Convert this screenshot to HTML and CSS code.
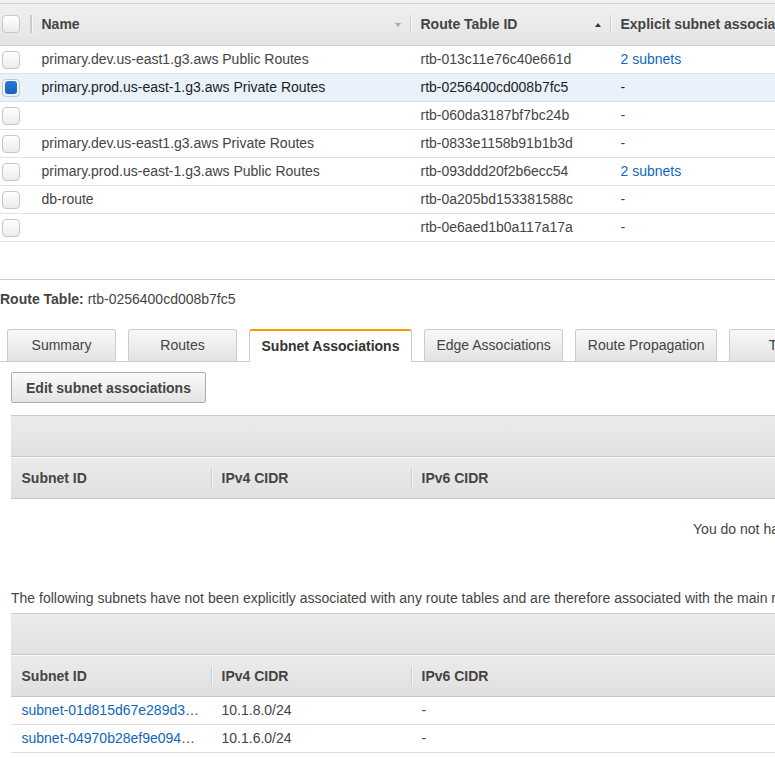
FILE: index.html
```html
<!DOCTYPE html>
<html lang="en">
<head>
<meta charset="utf-8">
<title>Route Tables</title>
<link rel="stylesheet" href="styles.css">
</head>
<body>
<div class="page">
  <section class="master">
    <div class="top-strip"></div>
    <div class="rt-row rt-head">
      <div class="cell chk-cell"><span class="chk"></span></div>
      <div class="cell hcell sep">Name<span class="sort sort-down"></span></div>
      <div class="cell hcell sep">Route Table ID<span class="sort sort-up"></span></div>
      <div class="cell hcell sep">Explicit subnet association</div>
    </div>
    <div class="rt-row"><div class="cell chk-cell"><span class="chk"></span></div><div class="cell">primary.dev.us-east1.g3.aws Public Routes</div><div class="cell">rtb-013c11e76c40e661d</div><div class="cell"><a class="link">2 subnets</a></div></div>
    <div class="rt-row selected"><div class="cell chk-cell"><span class="chk checked"></span></div><div class="cell">primary.prod.us-east-1.g3.aws Private Routes</div><div class="cell">rtb-0256400cd008b7fc5</div><div class="cell">-</div></div>
    <div class="rt-row"><div class="cell chk-cell"><span class="chk"></span></div><div class="cell"></div><div class="cell">rtb-060da3187bf7bc24b</div><div class="cell">-</div></div>
    <div class="rt-row"><div class="cell chk-cell"><span class="chk"></span></div><div class="cell">primary.dev.us-east1.g3.aws Private Routes</div><div class="cell">rtb-0833e1158b91b1b3d</div><div class="cell">-</div></div>
    <div class="rt-row"><div class="cell chk-cell"><span class="chk"></span></div><div class="cell">primary.prod.us-east-1.g3.aws Public Routes</div><div class="cell">rtb-093ddd20f2b6ecc54</div><div class="cell"><a class="link">2 subnets</a></div></div>
    <div class="rt-row"><div class="cell chk-cell"><span class="chk"></span></div><div class="cell">db-route</div><div class="cell">rtb-0a205bd153381588c</div><div class="cell">-</div></div>
    <div class="rt-row"><div class="cell chk-cell"><span class="chk"></span></div><div class="cell"></div><div class="cell">rtb-0e6aed1b0a117a17a</div><div class="cell">-</div></div>
  </section>
  <div class="splitter"></div>
  <section class="details">
    <div class="detail-title"><b>Route Table:</b> rtb-0256400cd008b7fc5</div>
    <nav class="tabs">
      <span class="tab">Summary</span>
      <span class="tab">Routes</span>
      <span class="tab active">Subnet Associations</span>
      <span class="tab">Edge Associations</span>
      <span class="tab">Route Propagation</span>
      <span class="tab">Tags</span>
    </nav>
    <div class="tab-body">
      <button class="btn">Edit subnet associations</button>
      <div class="grid">
        <div class="grid-toolbar"></div>
        <div class="grid-row grid-head">
          <div class="cell hcell">Subnet ID</div>
          <div class="cell hcell sep">IPv4 CIDR</div>
          <div class="cell hcell sep">IPv6 CIDR</div>
        </div>
        <div class="empty">You do not have any subnet associations.</div>
      </div>
      <p class="note">The following subnets have not been explicitly associated with any route tables and are therefore associated with the main route table:</p>
      <div class="grid grid2">
        <div class="grid-toolbar"></div>
        <div class="grid-row grid-head">
          <div class="cell hcell">Subnet ID</div>
          <div class="cell hcell sep">IPv4 CIDR</div>
          <div class="cell hcell sep">IPv6 CIDR</div>
        </div>
        <div class="grid-row"><div class="cell"><a class="link">subnet-01d815d67e289d3a1f</a></div><div class="cell">10.1.8.0/24</div><div class="cell">-</div></div>
        <div class="grid-row"><div class="cell"><a class="link">subnet-04970b28ef9e094c2d</a></div><div class="cell">10.1.6.0/24</div><div class="cell">-</div></div>
      </div>
    </div>
  </section>
</div>
</body>
</html>
```

FILE: styles.css
```css
html, body {
  margin: 0;
  padding: 0;
  overflow: hidden;
  background: #fff;
}
body {
  font-family: "Liberation Sans", Arial, sans-serif;
  font-size: 14px;
  color: #444;
}
.page {
  width: 1644px;
}
.master {
  height: 279px;
}
.top-strip {
  height: 3px;
  background: #f2f2f2;
  border-bottom: 1px solid #d3d3d3;
}
.rt-row {
  display: grid;
  grid-template-columns: 31px 379px 200px 1fr;
  height: 27px;
  border-bottom: 1px solid #e1e1e1;
}
.rt-row.selected {
  background: #e9f1fb;
  color: #1e1e1e;
}
.rt-head {
  height: 41px;
  background: linear-gradient(#f0f0f0, #e4e4e4);
  border-bottom: 1px solid #cdcdcd;
}
.cell {
  position: relative;
  padding: 0 11px 0 10.5px;
  line-height: 27px;
  white-space: nowrap;
  overflow: hidden;
  text-overflow: ellipsis;
}
.hcell {
  line-height: 41px;
  font-weight: bold;
  color: #444;
}
.grid-head .hcell {
  line-height: 40px;
}
.sep::before {
  content: "";
  position: absolute;
  left: 0;
  top: 11px;
  height: 18px;
  border-left: 1px solid #cbcbcb;
  border-right: 1px solid #f7f7f7;
}
.chk-cell {
  padding: 0 0 0 2px;
  display: flex;
  align-items: center;
  overflow: visible;
}
.rt-head .chk-cell {
  border-right: 1px solid #cbcbcb;
  height: 18px;
  margin-top: 11px;
}
.chk {
  display: flex;
  align-items: center;
  justify-content: center;
  width: 16px;
  height: 16px;
  border: 1px solid #c7c7c7;
  border-radius: 4px;
  background: linear-gradient(#ffffff, #ececec);
}
.chk.checked::after {
  content: "";
  width: 12px;
  height: 13px;
  border-radius: 3px;
  background: linear-gradient(#2c7ad6, #1461bf);
}
.sort {
  position: absolute;
  right: 9px;
  top: 19px;
  width: 0;
  height: 0;
  border-left: 3.5px solid transparent;
  border-right: 3.5px solid transparent;
}
.sort-down {
  border-top: 4px solid #a8a8a8;
}
.sort-up {
  right: 9px;
  border-bottom: 4px solid #333;
}
.link {
  color: #1166bb;
  text-decoration: none;
}
.splitter {
  height: 1px;
  background: #cfcfcf;
}
.detail-title {
  margin-top: 11px;
  line-height: 16px;
  color: #444;
}
.detail-title b {
  color: #444;
}
.tabs {
  display: flex;
  align-items: flex-end;
  gap: 12px;
  margin-top: 22px;
  padding-left: 7px;
  height: 32px;
  border-bottom: 1px solid #cccccc;
}
.tab {
  box-sizing: border-box;
  min-width: 109px;
  height: 32px;
  padding: 0 11.5px;
  border: 1px solid #cccccc;
  border-bottom: none;
  border-radius: 3px 3px 0 0;
  background: linear-gradient(#f8f8f8, #e3e3e3);
  text-align: center;
  line-height: 31px;
  color: #444;
  white-space: nowrap;
}
.tab.active {
  height: 33px;
  margin-bottom: -1px;
  background: #fff;
  border-top: 2px solid #ff9900;
  line-height: 30px;
  font-weight: bold;
  color: #333;
}
.tab-body {
  padding: 10px 11px 0;
}
.btn {
  display: block;
  height: 31px;
  padding: 0 14px;
  border: 1px solid #adadad;
  border-radius: 2px;
  background: linear-gradient(#fafafa, #e4e4e4);
  font-family: "Liberation Sans", Arial, sans-serif;
  font-size: 14px;
  font-weight: bold;
  color: #444;
}
.grid {
  margin-top: 12px;
  border-top: 1px solid #cccccc;
}
.grid-toolbar {
  height: 40px;
  background: linear-gradient(#ececec, #e1e1e1);
  border-bottom: 1px solid #c9c9c9;
}
.grid-row {
  display: grid;
  grid-template-columns: 200px 200px 1fr;
  height: 27px;
  border-bottom: 1px solid #dedede;
}
.grid-head {
  height: 40px;
  border-top: 1px solid #fbfbfb;
  border-bottom: 1px solid #c6c6c6;
  background: linear-gradient(#ebebeb, #e0e0e0);
}
.grid-head .sep::before {
  top: 11px;
}
.empty {
  padding: 20px 0;
  line-height: 20px;
  text-align: center;
  color: #444;
}
.note {
  margin: 31px 0 0;
  line-height: 16px;
  color: #444;
}
.grid2 {
  margin-top: 7px;
}
```
